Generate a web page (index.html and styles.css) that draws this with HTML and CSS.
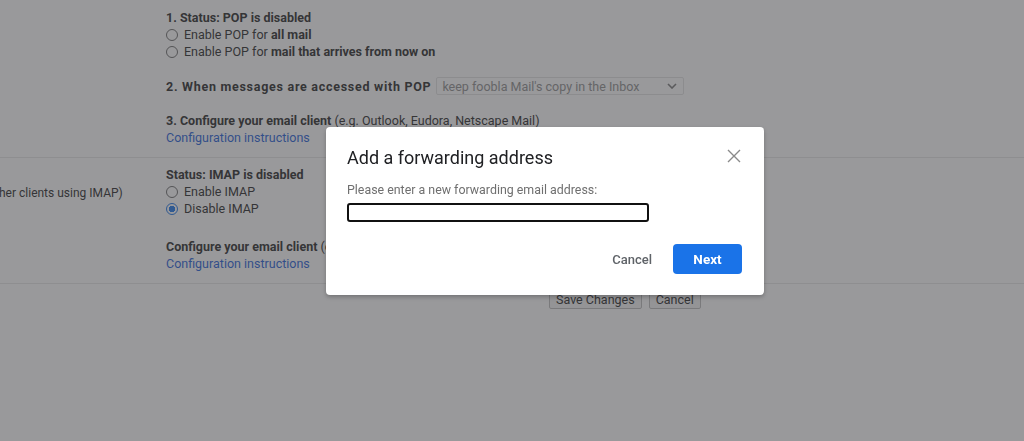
FILE: index.html
```html
<!DOCTYPE html>
<html>
  <head>
    <meta charset="utf-8">
    <title>Settings</title>
    <link rel="stylesheet" href="styles.css">
  </head>
  <body>
    <div class="settings">
      <div class="row pop">
        <div class="label"></div>
        <div class="content">
          <div class="line bold">1. Status: POP is disabled</div>
          <div class="line"><span class="radio"></span>Enable POP for <b>all mail</b></div>
          <div class="line"><span class="radio"></span>Enable POP for <b>mail that arrives from now on</b></div>
          <div class="line select-line">
            <b class="wide">2. When messages are accessed with POP</b>
            <span class="select">keep foobla Mail's copy in the Inbox
              <svg class="chev" width="10" height="6" viewBox="0 0 10 6"><path d="M1 1l4 4 4-4" fill="none" stroke="#777" stroke-width="1.6"/></svg>
            </span>
          </div>
          <div class="line gap"><b>3. Configure your email client</b> (e.g. Outlook, Eudora, Netscape Mail)</div>
          <div class="line"><a href="#">Configuration instructions</a></div>
        </div>
      </div>
      <div class="row imap">
        <div class="label"><span class="label-text">(access foobla Mail from other clients using IMAP)</span></div>
        <div class="content">
          <div class="line bold">Status: IMAP is disabled</div>
          <div class="line"><span class="radio"></span>Enable IMAP</div>
          <div class="line"><span class="radio on"></span>Disable IMAP</div>
          <div class="line gap2"><b>Configure your email client</b> (e.g. Outlook, Thunderbird, iPhone)</div>
          <div class="line"><a href="#">Configuration instructions</a></div>
        </div>
      </div>
      <div class="actions">
        <button class="old-btn">Save Changes</button>
        <button class="old-btn">Cancel</button>
      </div>
    </div>

    <div class="scrim"></div>

    <div class="dialog">
      <div class="dialog-head">
        <h2>Add a forwarding address</h2>
        <svg class="close" width="14" height="14" viewBox="0 0 14 14"><path d="M1 1l12 12M13 1L1 13" stroke="#8a8a8a" stroke-width="1.4"/></svg>
      </div>
      <p class="hint">Please enter a new forwarding email address:</p>
      <input class="addr" type="text">
      <div class="dialog-foot">
        <button class="text-btn">Cancel</button>
        <button class="primary">Next</button>
      </div>
    </div>
  </body>
</html>
```

FILE: styles.css
```css
*{
  margin: 0;
  padding: 0;
  box-sizing: border-box;
}
body{
  overflow: hidden;
  background: #fff;
  color: #222;
  font-family: Roboto, Arial, sans-serif;
  font-size: 12.5px;
}
.row{
  display: grid;
  grid-template-columns: 166px 1fr;
  border-bottom: 1px solid #e6e6e6;
}
.pop{
  padding: 9px 0 11px;
}
.imap{
  padding: 8px 0 11px;
}
.label{
  overflow: hidden;
  white-space: nowrap;
  font-size: 12px;
  line-height: 17px;
  padding-top: 19px;
}
.label-text{
  display: inline-block;
  margin-left: -148px;
}
.line{
  height: 17px;
  line-height: 17px;
  white-space: nowrap;
}
.line b{
  font-weight: 700;
}
.bold{
  font-weight: 700;
}
.radio{
  display: inline-block;
  vertical-align: -2px;
  width: 12px;
  height: 12px;
  border: 1px solid #666;
  border-radius: 50%;
  margin-right: 6px;
}
.radio.on{
  border-color: #1a73e8;
  background: radial-gradient(circle, #1a73e8 3px, #fff 3.5px);
}
.select-line{
  display: flex;
  align-items: center;
  margin-top: 17px;
  height: 18px;
}
.wide{
  letter-spacing: 0.72px;
}
.select{
  display: flex;
  align-items: center;
  justify-content: space-between;
  width: 248px;
  height: 18px;
  margin-left: 5px;
  padding: 0 6px 0 5px;
  border: 1px solid #e2e2e2;
  border-radius: 2px;
  color: #8c8c8c;
  font-size: 12.5px;
}
.gap{
  margin-top: 17px;
}
.gap2{
  margin-top: 21px;
}
a{
  color: #1a5bd8;
  text-decoration: none;
}
.actions{
  display: flex;
  gap: 7px;
  padding: 5px 0 0 549px;
}
.old-btn{
  font-family: Roboto, Arial, sans-serif;
  font-size: 12.5px;
  color: #222;
  background: #f4f4f4;
  border: 1px solid #bbb;
  border-radius: 2px;
  height: 20px;
  padding: 0 6px;
}
.scrim{
  position: fixed;
  top: 0;
  left: 0;
  right: 0;
  bottom: 0;
  background: rgba(70, 70, 72, 0.55);
}
.dialog{
  position: fixed;
  left: 326px;
  top: 127px;
  width: 438px;
  height: 168px;
  background: #fff;
  border-radius: 4px;
  box-shadow: 0 2px 4px rgba(0,0,0,0.25);
  padding: 19px 22px 21px 21px;
}
.dialog-head{
  display: flex;
  justify-content: space-between;
  align-items: center;
}
.dialog-head h2{
  font-family: Roboto, Arial, sans-serif;
  font-size: 18px;
  font-weight: 400;
  line-height: 24px;
  color: #202124;
}
.close{
  margin-right: 1px;
  margin-top: -4px;
}
.hint{
  margin-top: 12px;
  font-size: 12.4px;
  line-height: 16px;
  color: #6f6f6f;
}
.addr{
  display: block;
  margin-top: 5px;
  width: 302px;
  height: 19px;
  border: 2px solid #111;
  border-radius: 3px;
  outline: none;
}
.dialog-foot{
  display: flex;
  justify-content: flex-end;
  align-items: center;
  gap: 6px;
  margin-top: 22px;
}
.text-btn{
  font-family: Roboto, Arial, sans-serif;
  font-size: 13px;
  font-weight: 500;
  color: #5f6368;
  background: none;
  border: none;
  padding: 0 15px;
  height: 30px;
}
.primary{
  font-family: Roboto, Arial, sans-serif;
  font-size: 13.5px;
  font-weight: 700;
  color: #fff;
  background: #1a73e8;
  border: none;
  border-radius: 4px;
  width: 69px;
  height: 30px;
}
```
